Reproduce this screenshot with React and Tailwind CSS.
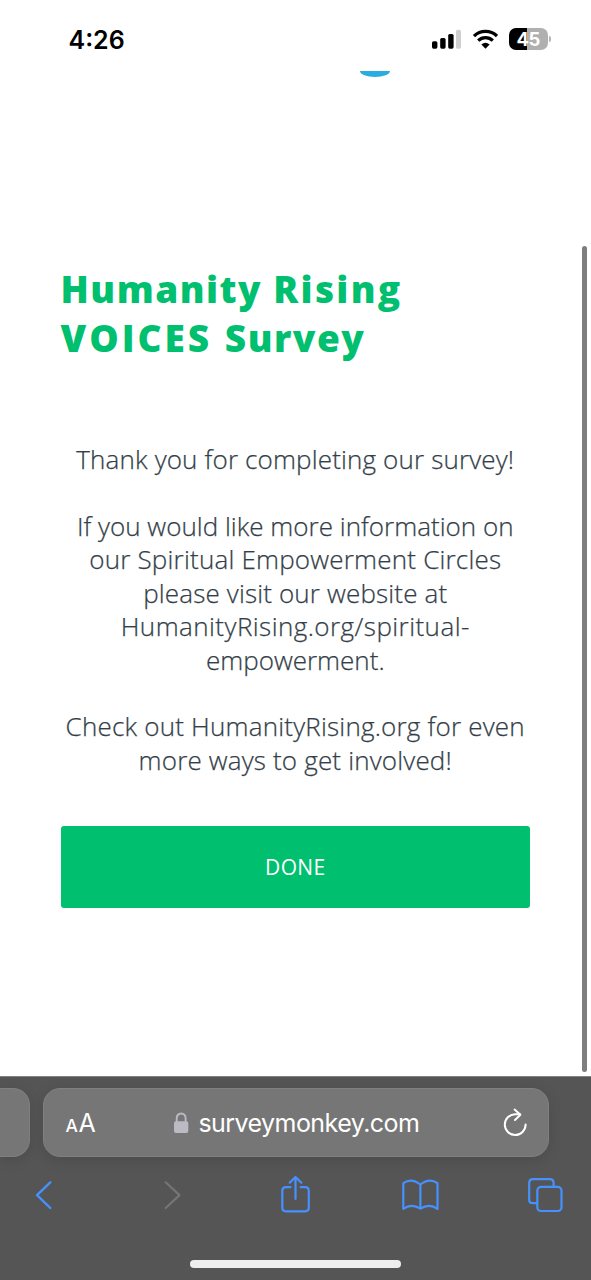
const paragraphs = [
  [["Thank you for completing our survey!", "tracking-[0.15px]"]],
  [
    ["If you would like more information on", "tracking-[0.01px]"],
    ["our Spiritual Empowerment Circles", "tracking-[0.2px]"],
    ["please visit our website at", "tracking-[0.15px]"],
    ["HumanityRising.org/spiritual-", "tracking-[0.44px]"],
    ["empowerment.", "tracking-[0px]"],
  ],
  [
    ["Check out HumanityRising.org for even", "tracking-[0.2px]"],
    ["more ways to get involved!", "tracking-[0.17px]"],
  ],
];

function StatusBar() {
  return (
    <header className="flex h-[71px] shrink-0 items-start justify-between pl-[68.5px] pr-[40px] pt-[28px]">
      <div className="pt-px text-[25px] font-semibold leading-[23px] tracking-[0px] text-black">4:26</div>
      <div className="flex h-[22px] items-center">
        <svg className="mr-[11px] h-[22px] w-[30px]" viewBox="0 0 30 22">
          <rect x="1" y="13.3" width="5.4" height="7.4" rx="1.6" fill="#000" />
          <rect x="9.2" y="10" width="5.4" height="10.7" rx="1.6" fill="#000" />
          <rect x="17.2" y="6" width="5.4" height="14.7" rx="1.6" fill="#000" />
          <rect x="25" y="1.8" width="5" height="18.9" rx="1.6" fill="#cfcfcf" />
        </svg>
        <svg className="mr-[11px] h-[22px] w-[26px]" viewBox="0 0 26 22" fill="none" stroke="#000">
          <path d="M2 8.1A16.5 16.5 0 0 1 25 8.1" strokeWidth="3.2" />
          <path d="M6.2 12.7A10.4 10.4 0 0 1 20.8 12.7" strokeWidth="3.2" />
          <path d="M13.5 20.8L9.4 16.5Q13.5 13 17.6 16.5Z" fill="#000" stroke="none" />
        </svg>
        <div className="flex h-[22px] w-[38.5px] items-center justify-center rounded-[7px] bg-[linear-gradient(90deg,#000_45%,#b0b0b0_45%)] text-[18.5px] font-bold leading-none tracking-[-0.4px] text-white">
          45
        </div>
        <div className="ml-[1px] h-[6px] w-[2.5px] rounded-r-full bg-[#b5b5b5]" />
      </div>
    </header>
  );
}

function Toolbar() {
  return (
    <nav className="flex h-[76px] items-center">
      <svg className="h-[76px] w-[591px]" viewBox="0 0 591 76" fill="none" stroke="#4691fd" strokeWidth="2.2" strokeLinecap="round" strokeLinejoin="round">
        <path d="M50.3 25.3L37 38.1L50.3 51" strokeWidth="2.4" />
        <path d="M165.7 25.3L179.5 38.1L165.7 51" stroke="#757575" strokeWidth="2.2" />
        <path d="M290.5 30.2H286Q282.3 30.2 282.3 34V50.8Q282.3 54.3 286 54.3H305Q308.8 54.3 308.8 50.8V34Q308.8 30.2 305 30.2H300.7" />
        <path d="M295.5 42V20.5M289.7 25.7L295.5 20L301.3 25.7" />
        <path d="M420.4 27.5Q411.5 20.3 403.3 26.2V51.8Q411.5 46 420.4 51.6Q429.3 46 437.5 51.8V26.2Q429.3 20.3 420.4 27.5V51.6" />
        <rect x="537.3" y="29.8" width="24.2" height="24.2" rx="3.8" />
        <path d="M536.8 46.2H533Q529.2 46.2 529.2 42.4V26Q529.2 22.2 533 22.2H549.8Q553.6 22.2 553.6 26V29.4" />
      </svg>
    </nav>
  );
}

function BrowserBar() {
  return (
    <footer className="flex h-[204px] shrink-0 flex-col overflow-hidden border-t border-[#828282] bg-[#555555]">
      <div className="flex pt-[11.4px]">
        <div className="h-[69px] w-[30px] rounded-r-[17px] border border-l-0 border-[#7f7f7f] bg-[#767676] shadow-[0_3px_14px_rgba(0,0,0,0.12)]" />
        <div className="ml-[12.6px] flex h-[69px] w-[506px] items-center rounded-[17px] border border-[#7f7f7f] bg-[#767676] pl-[22px] pr-[19.5px] text-white shadow-[0_3px_14px_rgba(0,0,0,0.12)]">
          <div className="flex w-[107.5px] items-baseline pt-[2px] leading-none">
            <span className="text-[17.5px] font-medium">A</span>
            <span className="ml-[0.6px] text-[25px]">A</span>
          </div>
          <svg className="h-[22px] w-[16px]" viewBox="0 0 16 22">
            <rect x="1" y="9.2" width="14.3" height="11.8" rx="2" fill="#bcbbc3" />
            <path d="M3.7 10V5.9a4.45 4.45 0 0 1 8.9 0V10" fill="none" stroke="#bcbbc3" strokeWidth="1.9" />
          </svg>
          <div className="ml-[9.3px] flex-1 whitespace-nowrap pt-[2px] text-[25px] leading-none tracking-[-0.55px]">surveymonkey.com</div>
          <svg className="h-[30px] w-[26px]" viewBox="0 0 26 30" fill="none" stroke="#fff" strokeWidth="2" strokeLinecap="round" strokeLinejoin="round">
            <path d="M23.6 16.6A10.4 10.4 0 1 1 13.2 6.2H18" />
            <path d="M12.6 1.6L18.4 6.7L13 12" />
          </svg>
        </div>
      </div>
      <Toolbar />
      <div className="mx-auto mt-[26.8px] h-[8px] w-[211px] rounded-full bg-[#eeeeee]" />
    </footer>
  );
}

export default function App() {
  return (
    <div className="relative flex h-[1280px] w-[591px] flex-col overflow-hidden bg-white font-['Inter',sans-serif]">
      <StatusBar />
      <main className="flex h-[1005px] shrink-0 flex-col pl-[60.5px] pr-[61px] font-['Open_Sans',sans-serif]">
        <div className="ml-[299px] h-[6px] w-[30px] rounded-b-[50%_100%] bg-[#2aace2]" />
        <h1 className="mt-[188px] text-[37px] font-extrabold leading-[48.5px] text-[#00bf6f]">
          <span className="block tracking-[1.5px]">Humanity <span className="tracking-[2.3px]">Rising</span></span>
          <span className="block tracking-[3px]">VOICES <span className="tracking-[1.5px]">Survey</span></span>
        </h1>
        <div className="-mx-4 mt-[81.3px] flex flex-col gap-[33.4px] text-center text-[26px] font-light leading-[33.37px] text-[#333e48] [-webkit-text-stroke:0.25px_#333e48]">
          {paragraphs.map((lines, i) => (
            <p key={i}>
              {lines.map(([text, tracking]) => (
                <span key={text} className={"block whitespace-nowrap " + tracking}>{text}</span>
              ))}
            </p>
          ))}
        </div>
        <button className="mt-[48.5px] h-[82px] w-[469.5px] rounded-[3px] bg-[#00bf6f] pt-[2px] text-[21px] tracking-[0.3px] text-white">DONE</button>
      </main>
      <BrowserBar />
      <div className="absolute left-[582px] top-[246px] h-[825.5px] w-[4.5px] rounded-full bg-[#7e7e7e]" />
    </div>
  );
}
